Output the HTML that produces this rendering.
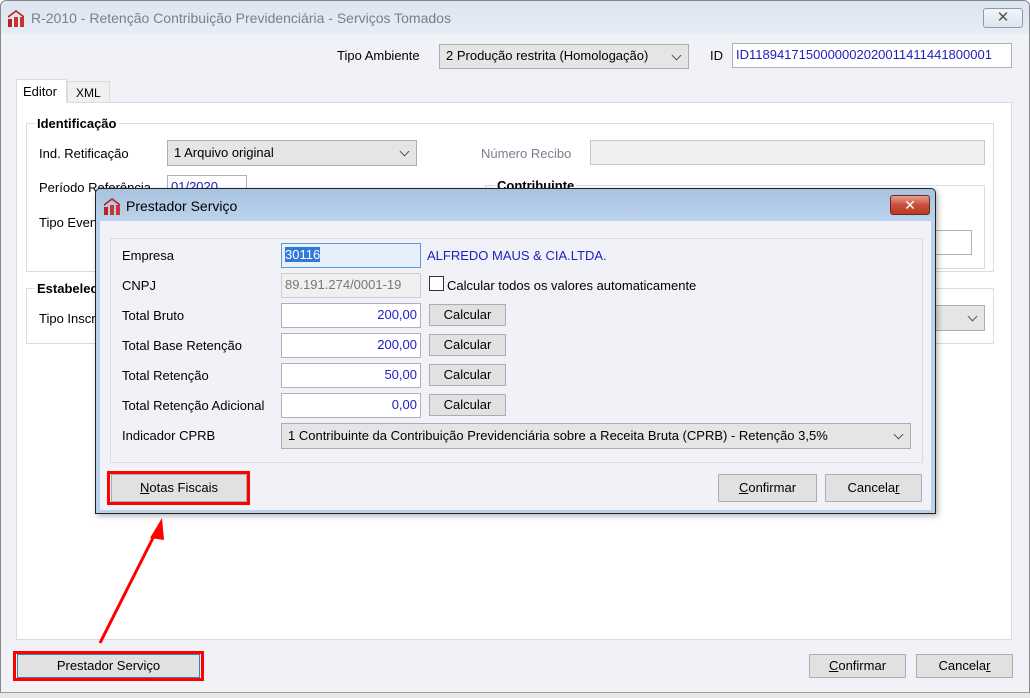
<!DOCTYPE html>
<html><head><meta charset="utf-8"><style>
*{box-sizing:border-box;margin:0;padding:0}
body{width:1030px;height:698px;overflow:hidden;background:#fff;font-family:"Liberation Sans","DejaVu Sans",sans-serif;font-size:13px;color:#000;position:relative}
.a{position:absolute;white-space:nowrap}
.lbl{position:absolute;white-space:nowrap;font-size:13px}
.combo{position:absolute;background:#e5e5e5;border:1px solid #adadad;padding:0 0 0 6px;line-height:22px;font-size:13px;white-space:nowrap;overflow:hidden}
.chev{position:absolute;right:8px;top:7px;width:7px;height:7px;border-right:1px solid #555;border-bottom:1px solid #555;transform:rotate(45deg)}
.edit{position:absolute;background:#fff;border:1px solid #adb2b5;line-height:22px;font-size:13px;padding:0 3px;white-space:nowrap;overflow:hidden}
.btn{position:absolute;background:#e1e1e1;border:1px solid #adadad;text-align:center;line-height:22px;font-size:13px}
.grp{position:absolute;border:1px solid #dcdcdc}
.gt{position:absolute;font-weight:bold;font-size:13px;background:#fff;padding:0 2px}
.red{position:absolute;border:3px solid #f00}
</style></head><body>
<!-- main window -->
<div class="a" style="left:0;top:0;width:1030px;height:698px;background:#f0f2f7;border:1px solid #888;border-radius:6px 6px 0 0"></div>
<div class="a" style="left:1px;top:1px;width:1028px;height:33px;background:linear-gradient(#dbe5f1,#e6edf5);border-radius:6px 6px 0 0"></div>
<svg class="a" style="left:7px;top:9px" width="18" height="18" viewBox="0 0 18 18"><path d="M1 7 L9 1 L17 7 L17 9 L9 3 L1 9Z" fill="#b22"/><rect x="1" y="10" width="4" height="8" fill="#b22"/><rect x="7" y="8" width="4" height="10" fill="#c33"/><rect x="13" y="8" width="4" height="10" fill="#c33"/></svg>
<div class="a" style="left:31px;top:10px;font-size:14px;color:#7a7f88">R-2010 - Retenção Contribuição Previdenciária - Serviços Tomados</div>
<div class="a" style="left:983px;top:8px;width:40px;height:20px;border:1px solid #8d99a8;border-radius:3px;background:linear-gradient(#f2f5f9,#dfe5ee);text-align:center;font-size:15px;line-height:18px;color:#555;font-weight:bold">✕</div>

<div class="lbl" style="left:337px;top:48px">Tipo Ambiente</div>
<div class="combo" style="left:439px;top:44px;width:250px;height:25px">2 Produção restrita (Homologação)<div class="chev"></div></div>
<div class="lbl" style="left:710px;top:48px">ID</div>
<div class="edit" style="left:732px;top:43px;width:280px;height:25px;color:#2020c0;padding-left:3px">ID1189417150000002020011411441800001</div>

<!-- tabs -->
<div class="a" style="left:16px;top:102px;width:996px;height:538px;background:#fff;border:1px solid #dcdcdc"></div>
<div class="a" style="left:16px;top:79px;width:51px;height:24px;background:#fff;border:1px solid #dcdcdc;border-bottom:none;padding:4px 0 0 6px">Editor</div>
<div class="a" style="left:67px;top:81px;width:43px;height:21px;background:#f0f0f0;border:1px solid #dcdcdc;border-bottom:none;padding:4px 0 0 8px;font-size:12px">XML</div>

<div class="grp" style="left:26px;top:123px;width:968px;height:149px"></div>
<div class="gt" style="left:35px;top:116px">Identificação</div>
<div class="lbl" style="left:39px;top:146px">Ind. Retificação</div>
<div class="combo" style="left:167px;top:140px;width:250px;height:26px;line-height:24px">1 Arquivo original<div class="chev"></div></div>
<div class="lbl" style="left:481px;top:146px;color:#7a7f90">Número Recibo</div>
<div class="a" style="left:590px;top:140px;width:395px;height:25px;background:#f0f0f0;border:1px solid #c8c8c8"></div>
<div class="lbl" style="left:39px;top:180px">Período Referência</div>
<div class="edit" style="left:167px;top:175px;width:80px;height:22px;color:#2020c0">01/2020</div>
<div class="lbl" style="left:39px;top:215px">Tipo Evento</div>
<div class="grp" style="left:485px;top:185px;width:500px;height:84px"></div>
<div class="gt" style="left:495px;top:178px">Contribuinte</div>
<div class="a" style="left:930px;top:230px;width:42px;height:25px;border:1px solid #adb2b5;background:#fff"></div>

<div class="grp" style="left:26px;top:288px;width:968px;height:56px"></div>
<div class="gt" style="left:35px;top:281px">Estabelecimento</div>
<div class="lbl" style="left:39px;top:311px">Tipo Inscrição</div>
<div class="combo" style="left:910px;top:305px;width:75px;height:26px"><div class="chev"></div></div>

<!-- bottom buttons -->
<div class="btn" style="left:17px;top:654px;width:183px;height:24px;border-color:#3c7fb1">Prestador Serviço</div>
<div class="red" style="left:13px;top:651px;width:191px;height:30px"></div>
<div class="btn" style="left:809px;top:654px;width:97px;height:24px"><u>C</u>onfirmar</div>
<div class="btn" style="left:916px;top:654px;width:97px;height:24px">Cancela<u>r</u></div>
<div class="a" style="left:0;top:692px;width:1030px;height:6px;background:#e8e8e8;border-top:1px solid #999"></div>

<!-- arrow -->
<svg class="a" style="left:0;top:0" width="1030" height="698"><line x1="100" y1="643" x2="156" y2="532" stroke="#f00" stroke-width="3"/><path d="M162 518 L150 538 L164 540Z" fill="#f00"/></svg>

<!-- dialog -->
<div class="a" style="left:95px;top:188px;width:841px;height:326px;border:1px solid #222;border-radius:5px 5px 0 0;background:#b9d1ea;box-shadow:2px 2px 6px rgba(0,0,0,.3)"></div>
<div class="a" style="left:96px;top:189px;width:839px;height:32px;background:linear-gradient(#a8c3e0,#bcd3ec);border-radius:5px 5px 0 0"></div>
<svg class="a" style="left:103px;top:197px" width="18" height="18" viewBox="0 0 18 18"><path d="M1 7 L9 1 L17 7 L17 9 L9 3 L1 9Z" fill="#b22"/><rect x="1" y="10" width="4" height="8" fill="#b22"/><rect x="7" y="8" width="4" height="10" fill="#c33"/><rect x="13" y="8" width="4" height="10" fill="#c33"/></svg>
<div class="a" style="left:126px;top:198px;font-size:14px">Prestador Serviço</div>
<div class="a" style="left:890px;top:195px;width:40px;height:20px;border:1px solid #6b2a20;border-radius:3px;background:linear-gradient(#e8a090,#c8503a 50%,#b83a25);color:#fff;text-align:center;font-weight:bold;font-size:14px;line-height:18px">✕</div>
<div class="a" style="left:100px;top:221px;width:831px;height:289px;background:#f0f2f7"></div>
<div class="a" style="left:110px;top:238px;width:813px;height:225px;border:1px solid #dcdcdc"></div>

<div class="lbl" style="left:122px;top:248px">Empresa</div>
<div class="edit" style="left:281px;top:243px;width:140px;height:25px;background:#e6f0fb;border-color:#5a9bd5"><span style="background:#3079d6;color:#fff">30116</span></div>
<div class="lbl" style="left:427px;top:248px;color:#2020c0">ALFREDO MAUS &amp; CIA.LTDA.</div>
<div class="lbl" style="left:122px;top:278px">CNPJ</div>
<div class="edit" style="left:281px;top:273px;width:140px;height:25px;background:#f0f0f0;color:#777;border-color:#ccc">89.191.274/0001-19</div>
<div class="a" style="left:429px;top:276px;width:15px;height:15px;border:1px solid #333;background:#fff"></div>
<div class="lbl" style="left:447px;top:278px">Calcular todos os valores automaticamente</div>

<div class="lbl" style="left:122px;top:308px">Total Bruto</div>
<div class="edit" style="left:281px;top:303px;width:140px;height:25px;text-align:right;color:#2020c0">200,00</div>
<div class="btn" style="left:429px;top:304px;width:77px;height:22px;line-height:20px">Calcular</div>
<div class="lbl" style="left:122px;top:338px">Total Base Retenção</div>
<div class="edit" style="left:281px;top:333px;width:140px;height:25px;text-align:right;color:#2020c0">200,00</div>
<div class="btn" style="left:429px;top:334px;width:77px;height:22px;line-height:20px">Calcular</div>
<div class="lbl" style="left:122px;top:368px">Total Retenção</div>
<div class="edit" style="left:281px;top:363px;width:140px;height:25px;text-align:right;color:#2020c0">50,00</div>
<div class="btn" style="left:429px;top:364px;width:77px;height:22px;line-height:20px">Calcular</div>
<div class="lbl" style="left:122px;top:398px">Total Retenção Adicional</div>
<div class="edit" style="left:281px;top:393px;width:140px;height:25px;text-align:right;color:#2020c0">0,00</div>
<div class="btn" style="left:429px;top:394px;width:77px;height:22px;line-height:20px">Calcular</div>
<div class="lbl" style="left:122px;top:428px">Indicador CPRB</div>
<div class="combo" style="left:281px;top:423px;width:630px;height:26px;line-height:24px">1 Contribuinte da Contribuição Previdenciária sobre a Receita Bruta (CPRB) - Retenção 3,5%<div class="chev"></div></div>

<div class="btn" style="left:111px;top:474px;width:136px;height:28px;line-height:26px"><u>N</u>otas Fiscais</div>
<div class="red" style="left:107px;top:471px;width:143px;height:34px"></div>
<div class="btn" style="left:718px;top:474px;width:99px;height:28px;line-height:26px"><u>C</u>onfirmar</div>
<div class="btn" style="left:825px;top:474px;width:97px;height:28px;line-height:26px">Cancela<u>r</u></div>
</body></html>
